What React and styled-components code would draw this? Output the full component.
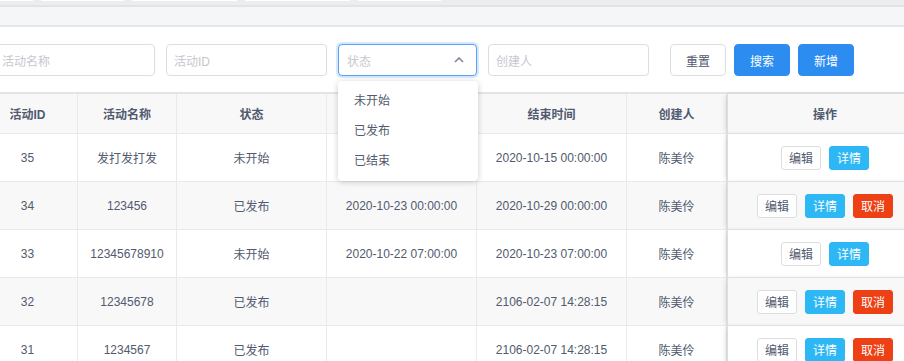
import React from "react";
import styled, { createGlobalStyle } from "styled-components";

const GlobalStyle = createGlobalStyle`
  html, body {
    margin: 0;
    padding: 0;
    background: #fff;
    font-family: "Liberation Sans", "Noto Sans CJK SC", sans-serif;
    font-size: 12px;
    color: #515a6e;
  }
  * { box-sizing: border-box; }
`;

const Page = styled.div`
  width: 904px;
  height: 361px;
  overflow: hidden;
  position: relative;
`;

const TabStrip = styled.div`
  height: 7px;
  background: #ededed;
  border-bottom: 2px solid #e3e3e3;
  display: flex;
  gap: 8px;
`;

const TabEdge = styled.div`
  width: ${(p) => p.w}px;
  height: 1px;
  background: #fff;
  flex-shrink: 0;
`;

const Band = styled.div`
  height: 20px;
  background: #f5f6f7;
  border-bottom: 2px solid #e7e8ea;
`;

const Content = styled.div`
  padding-top: 17px;
`;

const FilterRow = styled.div`
  display: flex;
  align-items: center;
  gap: 11px;
  margin-left: -6px;
  height: 32px;
`;

const Input = styled.div`
  width: ${(p) => p.w || 161}px;
  height: 32px;
  flex-shrink: 0;
  border: 1px solid #dcdee2;
  border-radius: 4px;
  padding: 0 7px;
  display: flex;
  align-items: center;
  color: #c5c8ce;
  font-size: 12px;
  background: #fff;
`;

const SelectWrap = styled.div`
  position: relative;
  flex-shrink: 0;
`;

const SelectBox = styled(Input)`
  border-color: #57a3f3;
  box-shadow: 0 0 0 2px rgba(45, 140, 240, 0.2);
  justify-content: space-between;
  padding: 0 12px 0 8px;
`;

const Menu = styled.div`
  position: absolute;
  top: 37px;
  left: 0;
  width: 140px;
  background: #fff;
  border-radius: 4px;
  box-shadow: 0 1px 6px rgba(0, 0, 0, 0.2);
  padding: 5px 0;
  z-index: 10;
`;

const MenuItem = styled.div`
  height: 30px;
  line-height: 30px;
  padding: 0 16px;
  color: #515a6e;
  font-size: 12px;
`;

const Button = styled.button`
  height: 32px;
  width: 56px;
  padding: 0;
  border-radius: 4px;
  font-family: inherit;
  font-size: 12px;
  flex-shrink: 0;
  border: 1px solid ${(p) => (p.primary ? "#2d8cf0" : "#dcdee2")};
  background: ${(p) => (p.primary ? "#2d8cf0" : "#fff")};
  color: ${(p) => (p.primary ? "#fff" : "#515a6e")};
  margin-left: ${(p) => (p.push ? 10 : -3)}px;
`;

const Table = styled.div`
  margin-top: 16px;
  margin-left: -22px;
  border-top: 2px solid #e3e4e6;
  display: grid;
  grid-template-columns: 100px 99px 150px 150px 150px 100px 196px;
`;

const Cell = styled.div`
  height: ${(p) => (p.head ? 40 : 48)}px;
  border-right: 1px solid #e8eaec;
  border-bottom: 1px solid #e8eaec;
  background: ${(p) => (p.head || p.stripe ? "#f8f8f9" : "#fff")};
  font-weight: ${(p) => (p.head ? 700 : 400)};
  display: flex;
  align-items: center;
  justify-content: center;
  gap: 8px;
  color: #515a6e;
  white-space: nowrap;
  ${(p) =>
    p.fixed &&
    `
    position: relative;
    z-index: 1;
    border-left: 1px solid #dcdee2;
    box-shadow: -2px 0 6px -2px rgba(0, 0, 0, 0.2);
  `}
`;

const SmallBtn = styled.span`
  height: 24px;
  padding: 0 7px;
  border-radius: 3px;
  font-size: 12px;
  display: inline-flex;
  align-items: center;
  border: 1px solid ${(p) => ({ edit: "#dcdee2", info: "#2db7f5", cancel: "#ed4014" }[p.kind])};
  background: ${(p) => ({ edit: "#fff", info: "#2db7f5", cancel: "#ed4014" }[p.kind])};
  color: ${(p) => (p.kind === "edit" ? "#515a6e" : "#fff")};
`;

const Chevron = () => (
  <svg width="10" height="6" viewBox="0 0 10 6">
    <path d="M1 5 L5 1 L9 5" fill="none" stroke="#808695" strokeWidth="1.6" />
  </svg>
);

const headers = ["活动ID", "活动名称", "状态", "开始时间", "结束时间", "创建人", "操作"];

// first row's start time sits under the open dropdown
const rows = [
  ["35", "发打发打发", "未开始", "", "2020-10-15 00:00:00", "陈美伶", false],
  ["34", "123456", "已发布", "2020-10-23 00:00:00", "2020-10-29 00:00:00", "陈美伶", true],
  ["33", "12345678910", "未开始", "2020-10-22 07:00:00", "2020-10-23 07:00:00", "陈美伶", false],
  ["32", "12345678", "已发布", "", "2106-02-07 14:28:15", "陈美伶", true],
  ["31", "1234567", "已发布", "", "2106-02-07 14:28:15", "陈美伶", true],
];

const tabs = [33, 83, 105, 105, 83];

export default function App() {
  return (
    <Page>
      <GlobalStyle />
      <TabStrip>
        {tabs.map((w, i) => (
          <TabEdge key={i} w={w} />
        ))}
      </TabStrip>
      <Band />
      <Content>
        <FilterRow>
          <Input>活动名称</Input>
          <Input>活动ID</Input>
          <SelectWrap>
            <SelectBox w={139}>
              <span>状态</span>
              <Chevron />
            </SelectBox>
            <Menu>
              <MenuItem>未开始</MenuItem>
              <MenuItem>已发布</MenuItem>
              <MenuItem>已结束</MenuItem>
            </Menu>
          </SelectWrap>
          <Input>创建人</Input>
          <Button push>重置</Button>
          <Button primary>搜索</Button>
          <Button primary>新增</Button>
        </FilterRow>
        <Table>
          {headers.map((h, i) => (
            <Cell head key={h} fixed={i === 6}>
              {h}
            </Cell>
          ))}
          {rows.map((r, ri) =>
            [
              ...r.slice(0, 6).map((v, ci) => (
                <Cell key={`${ri}-${ci}`} stripe={ri % 2 === 1}>
                  {v}
                </Cell>
              )),
              <Cell key={`${ri}-a`} stripe={ri % 2 === 1} fixed>
                <SmallBtn kind="edit">编辑</SmallBtn>
                <SmallBtn kind="info">详情</SmallBtn>
                {r[6] && <SmallBtn kind="cancel">取消</SmallBtn>}
              </Cell>,
            ]
          )}
        </Table>
      </Content>
    </Page>
  );
}
